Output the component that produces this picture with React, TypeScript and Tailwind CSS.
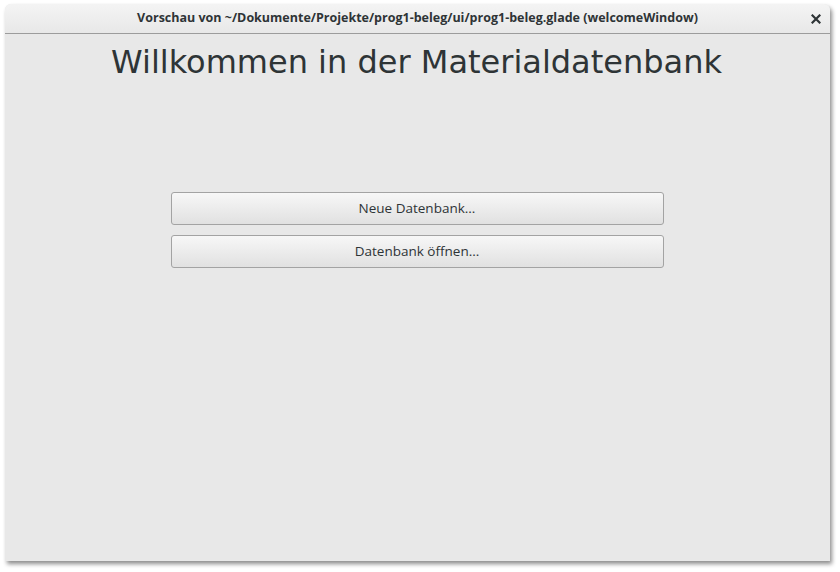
export default function App() {
  return (
    <div className="w-[840px] h-[572px] bg-white pt-[4px] pl-[5px] font-['DejaVu_Sans',sans-serif]">
      <div className="w-[825px] h-[557px] flex flex-col rounded-t-[6px] bg-[#e8e8e8] shadow-[2px_3px_4px_rgba(0,0,0,0.45)]">
        <div className="relative h-[30px] flex items-center justify-center rounded-t-[6px] border-b border-[#9c9c9c] bg-gradient-to-b from-[#f4f4f4] to-[#e8e8e8]">
          <span className="text-[12.5px] font-bold text-[#2e3436] font-['Open_Sans',sans-serif]">
            Vorschau von ~/Dokumente/Projekte/prog1-beleg/ui/prog1-beleg.glade (welcomeWindow)
          </span>
          <svg className="absolute right-[9px] top-[10px]" width="10" height="10" viewBox="0 0 10 10">
            <path d="M1.5 1.5 L8.5 8.5 M8.5 1.5 L1.5 8.5" stroke="#2e3436" strokeWidth="2.2" strokeLinecap="square" />
          </svg>
        </div>
        <div className="flex flex-col items-center">
          <h1 className="mt-[8px] mr-[2px] text-[32px] leading-[40px] text-[#2e3436]">Willkommen in der Materialdatenbank</h1>
          <div className="mt-[110px] mr-[1px] w-[493px] flex flex-col gap-[10px]">
            <button className="h-[33px] rounded-[3px] border border-[#a3a3a3] bg-gradient-to-b from-[#f7f7f7] to-[#e1e1e1] text-[13.5px] text-[#2e3436] font-['Open_Sans',sans-serif]">
              Neue Datenbank...
            </button>
            <button className="h-[33px] rounded-[3px] border border-[#a3a3a3] bg-gradient-to-b from-[#f7f7f7] to-[#e1e1e1] text-[13.5px] text-[#2e3436] font-['Open_Sans',sans-serif]">
              Datenbank öffnen...
            </button>
          </div>
        </div>
      </div>
    </div>
  );
}
